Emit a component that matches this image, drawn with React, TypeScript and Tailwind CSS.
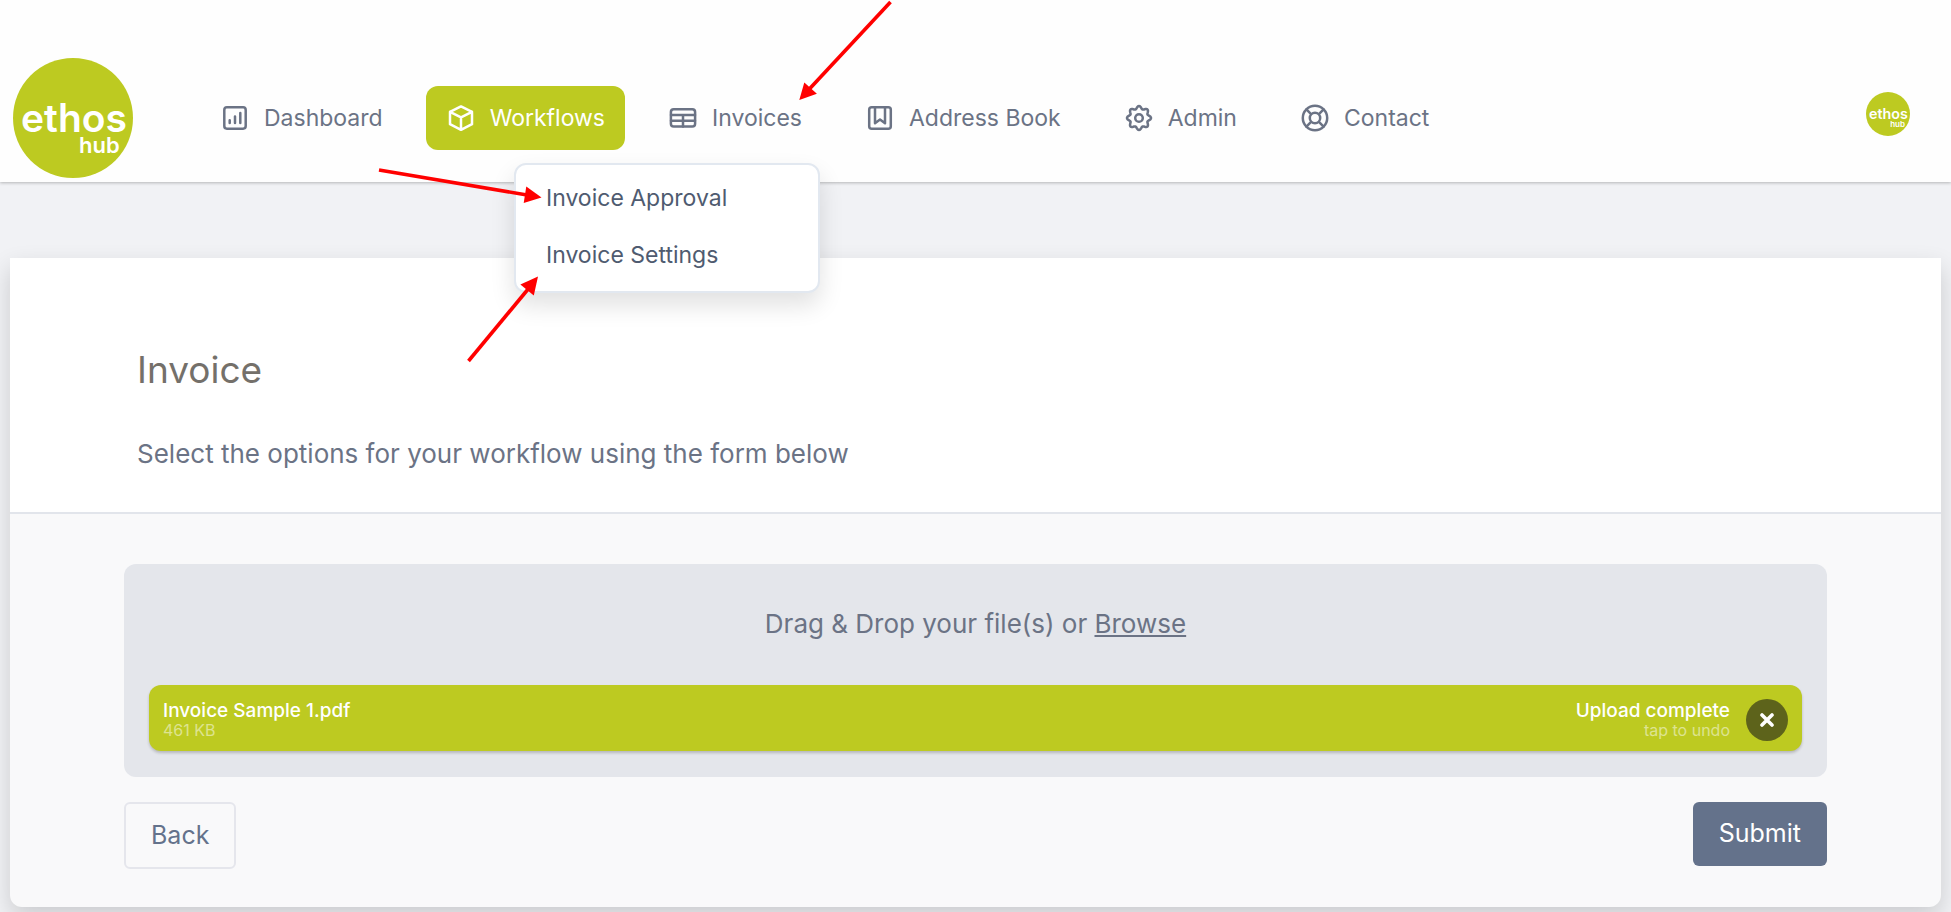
import type { ReactNode } from "react";

const stroke = {
  fill: "none",
  stroke: "currentColor",
  strokeWidth: 2.5,
  strokeLinecap: "round" as const,
  strokeLinejoin: "round" as const,
};

function Icon({ children }: { children: ReactNode }) {
  return (
    <svg viewBox="0 0 30 30" className="size-[30px] shrink-0" aria-hidden="true" {...stroke}>
      {children}
    </svg>
  );
}

const dashboardIcon = (
  <Icon>
    <rect x="4.3" y="4.3" width="21.4" height="21.4" rx="2.6" />
    <path d="M9.7 17.2v2.8M15 13.6v6.4M20.3 9.9v10.1" />
  </Icon>
);

const workflowsIcon = (
  <Icon>
    <path d="M15 3.4 26 8.8v12.4l-11 5.6-11-5.6V8.8zM4 8.8l11 5.6 11-5.6M15 14.4v12.4" />
  </Icon>
);

const invoicesIcon = (
  <Icon>
    <rect x="2.9" y="6.2" width="24.2" height="17.4" rx="2.8" />
    <path d="M3 12h24M3 17.8h24M15 12v11.4" />
  </Icon>
);

const addressIcon = (
  <Icon>
    <rect x="4.2" y="4.2" width="21.6" height="21.6" rx="2.5" />
    <path d="M10 4.6v15.6l5-3.6 5 3.6V4.6" />
  </Icon>
);

// Eight-lobed outline of the gear, sampled every three degrees.
const gearOutline =
  Array.from({ length: 120 }, (_, i) => {
    const angle = (i * Math.PI) / 60;
    const radius = 10.6 + 1.4 * Math.cos(8 * angle);
    const x = (15 + radius * Math.cos(angle)).toFixed(2);
    const y = (15 + radius * Math.sin(angle)).toFixed(2);
    return `${i === 0 ? "M" : "L"}${x} ${y}`;
  }).join("") + "Z";

const adminIcon = (
  <Icon>
    <path d={gearOutline} />
    <circle cx="15" cy="15" r="3.8" />
  </Icon>
);

const contactIcon = (
  <Icon>
    <circle cx="15" cy="15" r="12.2" />
    <circle cx="15" cy="15" r="5.2" />
    <path d="m6.4 6.4 4.7 4.7M23.6 6.4l-4.7 4.7M6.4 23.6l4.7-4.7M23.6 23.6l-4.7-4.7" />
  </Icon>
);

function Logo({ className }: { className: string }) {
  return (
    <svg viewBox="0 0 120 120" className={className} role="img" aria-label="ethos hub">
      <circle cx="60" cy="60" r="60" fill="#bdca21" />
      <text fill="#fff" fontFamily="Inter, sans-serif" fontWeight="600">
        <tspan x="8" y="73.5" fontSize="39">ethos</tspan>
        <tspan x="66" y="94.5" fontSize="22">hub</tspan>
      </text>
    </svg>
  );
}

function NavItem({ icon, label, active = false }: { icon: ReactNode; label: string; active?: boolean }) {
  return (
    <a
      href="#"
      aria-current={active ? "page" : undefined}
      className={
        active
          ? "flex h-16 items-center gap-3.5 rounded-xl bg-[#bdca21] px-5 text-white"
          : "flex h-16 items-center gap-3.5 rounded-xl px-5 text-[#6b7385]"
      }
    >
      {icon}
      {label}
    </a>
  );
}

function Arrows() {
  return (
    <svg className="pointer-events-none absolute top-0 left-0 z-20 h-[380px] w-[900px]" viewBox="0 0 900 380" aria-hidden="true">
      <g stroke="#f00" strokeWidth="3.6">
        <path d="M890.5 2 808 90.5" />
        <path d="M379 170l148 25" />
        <path d="M468.5 361 529 288" />
      </g>
      <g fill="#f00">
        <path d="M799.3 100l5-17.6 12.6 11.4z" />
        <path d="M541.5 197.4l-15.2-11-2.6 16.6z" />
        <path d="M538 276.6l-17.6 7.8 13.4 11z" />
      </g>
    </svg>
  );
}

export default function App() {
  return (
    <div className="relative min-h-screen bg-[#f1f2f5] pb-[5px] font-['Inter',sans-serif] text-[#6b7385]">
      <header className="relative z-10 flex h-[182px] items-center bg-[#fefefe] pt-[54px] pr-[41px] pl-[13px] shadow-[0_1px_3px_rgba(0,0,0,0.25)]">
        <Logo className="size-[120px] shrink-0" />
        <nav aria-label="Main" className="ml-[67px] flex gap-[23px] text-[23px]">
          <NavItem icon={dashboardIcon} label="Dashboard" />
          <NavItem icon={workflowsIcon} label="Workflows" active />
          <div className="relative">
            <NavItem icon={invoicesIcon} label="Invoices" />
            <ul className="absolute top-full right-0.5 mt-[13px] w-[306px] rounded-xl border-2 border-[#e2e8f0] bg-white pt-[5px] pb-[7px] text-[#4f5b70] shadow-[0_12px_24px_rgba(0,0,0,0.12)]">
              <li><a href="#" className="flex h-[57px] items-center px-[30px]">Invoice Approval</a></li>
              <li><a href="#" className="flex h-[57px] items-center px-[30px]">Invoice Settings</a></li>
            </ul>
          </div>
          <NavItem icon={addressIcon} label="Address Book" />
          <NavItem icon={adminIcon} label="Admin" />
          <NavItem icon={contactIcon} label="Contact" />
        </nav>
        <button type="button" aria-label="Account" className="mb-2 ml-auto">
          <Logo className="size-11" />
        </button>
      </header>

      <main className="mx-[10px] mt-[76px] rounded-b-xl bg-[#f9f9fa] shadow-[0_10px_25px_rgba(0,0,0,0.16)]">
        <section className="border-b-2 border-[#e2e5eb] bg-white px-[127px] pt-[88px] pb-10">
          <h1 className="text-[37px] leading-[48px] text-[#74706a]">Invoice</h1>
          <p className="mt-[42px] text-[26px] leading-9">Select the options for your workflow using the form below</p>
        </section>
        <form className="px-[114px] pt-[50px] pb-[38px]" onSubmit={(e) => e.preventDefault()}>
          <div className="rounded-xl bg-[#e4e6eb] px-[25px] pt-[42px] pb-[26px]">
            <p className="text-center text-[26px] leading-9">
              Drag &amp; Drop your file(s) or{" "}
              <button type="button" className="underline">Browse</button>
            </p>
            <div className="mt-[43px] flex h-[66px] items-center rounded-xl bg-[#bdca21] px-3.5 pt-1 text-white shadow-[0_2px_3px_rgba(0,0,0,0.2)]">
              <div>
                <div className="text-[19px] leading-5 font-medium">Invoice Sample 1.pdf</div>
                <div className="text-base leading-[18px] text-white/50">461 KB</div>
              </div>
              <div className="mr-4 ml-auto text-right">
                <div className="text-[19px] leading-5 font-medium">Upload complete</div>
                <div className="text-base leading-[18px] text-white/50">tap to undo</div>
              </div>
              <button type="button" aria-label="Undo upload" className="flex size-[42px] items-center justify-center rounded-full bg-[#5d631b]">
                <svg viewBox="0 0 14 14" className="size-3.5" aria-hidden="true">
                  <path d="M2 2l10 10M12 2 2 12" stroke="#fff" strokeWidth="3.6" strokeLinecap="round" />
                </svg>
              </button>
            </div>
          </div>
          <div className="mt-[25px] flex items-start justify-between text-[25px]">
            <button type="button" className="h-[67px] rounded-md border-2 border-[#e5e6ec] px-[25px] text-[#64728b]">Back</button>
            <button type="submit" className="h-16 rounded-md bg-[#64728b] px-[26px] text-white">Submit</button>
          </div>
        </form>
      </main>
      <Arrows />
    </div>
  );
}
